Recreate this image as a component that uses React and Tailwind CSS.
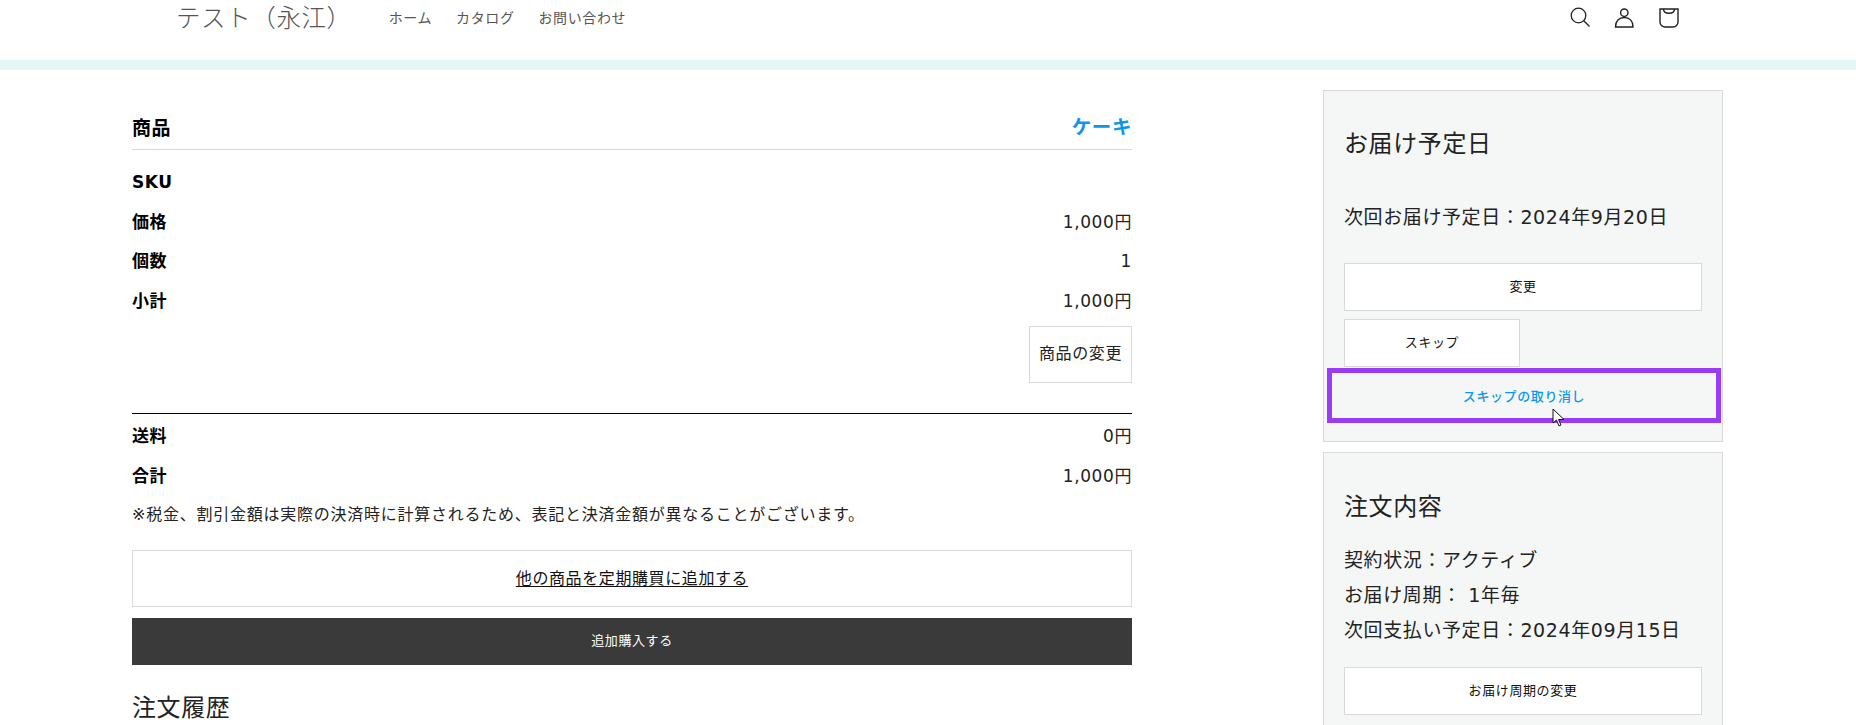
import React from "react";

const FONT = "font-['DejaVu_Sans','Noto_Sans_CJK_JP',sans-serif]";

const Row = ({ label, value }) => (
  <div className="flex h-[39.5px] items-center justify-between">
    <span className="text-[17px] font-bold text-black">{label}</span>
    <span className="text-[17px] text-[#222]">{value}</span>
  </div>
);

const OutlineButton = ({ children, className = "" }) => (
  <button className={`flex h-12 items-center justify-center border border-[#d9d9d9] bg-white text-[13px] text-[#111] ${className}`}>
    {children}
  </button>
);

const App = () => {
  return (
    <div className={`relative h-[725px] overflow-hidden bg-white tracking-[0.6px] ${FONT}`}>
      {/* HEADER */}
      <header className="flex h-[60px] items-start pl-[176px] pr-[176px]">
        <span className="text-[24.5px] leading-[38px] font-light text-[#555]">テスト（永江）</span>
        <nav className="ml-[37px] flex gap-[24px] pt-[9px] text-[14px] leading-[18px] text-[#555]">
          <a>ホーム</a>
          <a>カタログ</a>
          <a>お問い合わせ</a>
        </nav>
        <div className="ml-auto flex items-center gap-[22px] pt-[7px]">
          <svg width="22" height="22" viewBox="0 0 22 22" fill="none" stroke="#222" strokeWidth="1.3">
            <circle cx="8.500" cy="8.500" r="7.300" />
            <path d="M13.800 13.800l5.700 5.700" />
          </svg>
          <svg width="22" height="22" viewBox="0 0 22 22" fill="none" stroke="#222" strokeWidth="1.4">
            <circle cx="10.300" cy="5.700" r="3.700" />
            <path d="M1.500 20h17.500c0-6-3.500-9.500-8.750-9.500S1.500 14 1.500 20z" />
          </svg>
          <svg width="22" height="22" viewBox="0 0 22 22" fill="none" stroke="#222" strokeWidth="1.4">
            <path d="M2 2h18v13a5 5 0 0 1-5 5H7a5 5 0 0 1-5-5z" />
            <path d="M5.500 2c0 2.800 2.300 4.300 5.500 4.300s5.500-1.500 5.500-4.300" />
          </svg>
        </div>
      </header>
      <div className="h-[10px] bg-[#e4f6f5]" />

      <main className="flex items-start pl-[132px] pt-[20px]">
        {/* LEFT COLUMN */}
        <section className="mt-[18px] w-[1000px]">
          <div className="flex h-[42px] items-center justify-between border-b border-[#d9d9d9] pb-[1px] font-bold">
            <span className="text-[19px] text-black">商品</span>
            <span className="text-[19.5px] text-[#0c97e8]">ケーキ</span>
          </div>
          <div className="pt-[13px]">
            <Row label="SKU" value="" />
            <Row label="価格" value="1,000円" />
            <Row label="個数" value="1" />
            <Row label="小計" value="1,000円" />
          </div>
          <div className="mt-[5px] flex justify-end">
            <button className="h-[57px] w-[103px] border border-[#d9d9d9] pb-[2px] text-[16px] text-[#222]">商品の変更</button>
          </div>
          <div className="mt-[30px] border-t border-black pt-[3px]">
            <Row label="送料" value="0円" />
            <Row label="合計" value="1,000円" />
          </div>
          <p className="mt-[1px] text-[16px] leading-[36px] tracking-[0.75px] text-[#222]">
            ※税金、割引金額は実際の決済時に計算されるため、表記と決済金額が異なることがございます。
          </p>
          <OutlineButton className="mt-[17px] h-[57px] w-full">
            <span className="text-[16px] underline underline-offset-2">他の商品を定期購買に追加する</span>
          </OutlineButton>
          <button className="mt-[11px] h-[47px] w-full bg-[#3a3a3a] pb-[2px] text-[13px] text-white">追加購入する</button>
          <h2 className="mt-[28px] text-[24px] leading-[30px] text-[#222]">注文履歴</h2>
        </section>

        {/* SIDEBAR */}
        <aside className="ml-[191px] w-[400px]">
          <div className="h-[352px] border border-[#d9d9d9] bg-[#f5f7f6] px-[20px] pt-[35px]">
            <h2 className="text-[24px] leading-[36px] text-[#222]">お届け予定日</h2>
            <p className="mt-[38px] text-[19px] leading-[34px] text-[#222]">次回お届け予定日：2024年9月20日</p>
            <OutlineButton className="mt-[29px] w-full">変更</OutlineButton>
            <OutlineButton className="mt-[8px] w-[176px]">スキップ</OutlineButton>
            <button className="mx-[-17px] mt-[1px] h-[55px] w-[394px] border-[5px] border-[#9b3cf5] pt-[2px] text-[13px] font-medium text-[#0c97e8]">
              スキップの取り消し
            </button>
          </div>
          <div className="mt-[10px] h-[300px] border border-[#d9d9d9] bg-[#f5f7f6] px-[20px] pt-[36px]">
            <h2 className="text-[24px] leading-[36px] text-[#222]">注文内容</h2>
            <div className="mt-[18px] text-[19px] leading-[35px] text-[#222]">
              <p>契約状況：アクティブ</p>
              <p>お届け周期： 1年毎</p>
              <p>次回支払い予定日：2024年09月15日</p>
            </div>
            <OutlineButton className="mt-[19px] w-full">お届け周期の変更</OutlineButton>
          </div>
        </aside>
      </main>

      {/* mouse cursor in the capture */}
      <svg className="absolute left-[1552px] top-[408px]" width="14" height="19" viewBox="0 0 14 19">
        <path d="M1 1v14l3.500-3 2.500 6 2-1-2.500-5.500H12z" fill="#fff" stroke="#111" strokeWidth="1" />
      </svg>
    </div>
  );
};

export default App;
